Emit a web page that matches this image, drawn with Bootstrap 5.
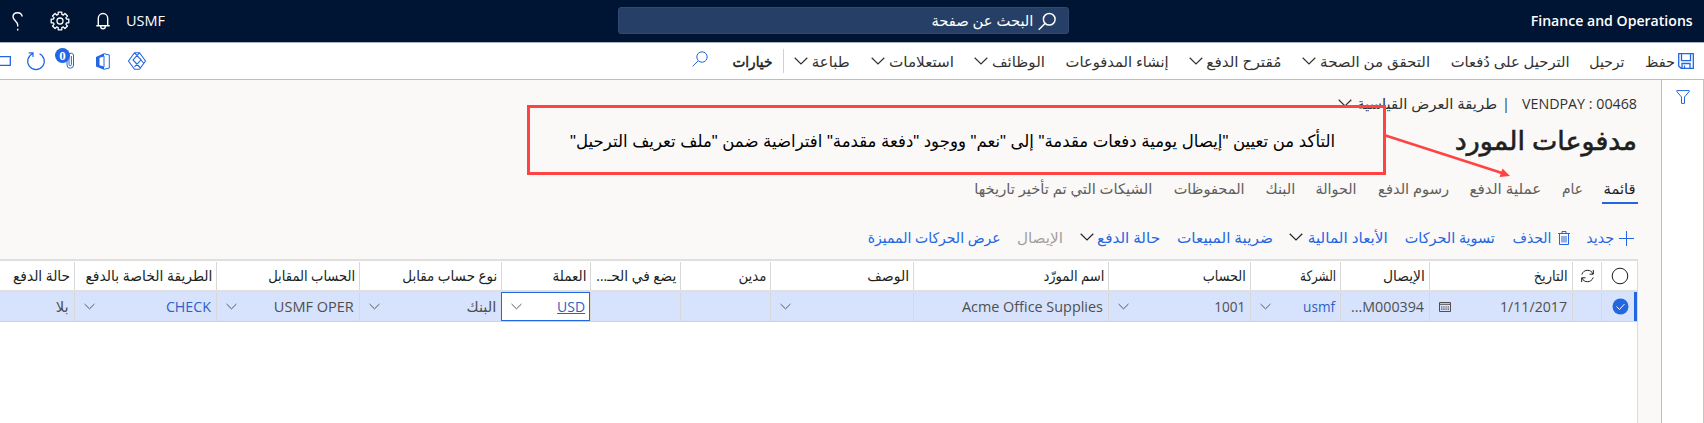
<!DOCTYPE html>
<html lang="ar" dir="rtl">
<head>
<meta charset="utf-8">
<title>مدفوعات المورد</title>
<link href="https://cdn.jsdelivr.net/npm/bootstrap@5.3.0/dist/css/bootstrap.min.css" rel="stylesheet">
<style>
:root{--blue:#2266e3;--line:#d8d8d8}
html,body{height:100%;overflow:hidden}
body{font-family:"Open Sans","DejaVu Sans",sans-serif;font-size:14.5px;line-height:20px;color:#323130;background:#faf9f8}
svg{display:block;flex:none;fill:none;stroke:currentColor;overflow:visible}
.lbl{display:block;flex:none;white-space:nowrap;overflow:visible}
.lbl>span{display:inline-block;transform-origin:100% 50%}
.topbar{height:43px;background:#001433;border-bottom:1px solid #a9b0bd;padding:0 11px 0 12px;color:#fff}
.finder{width:451px;height:27px;background:#263f66;border:1px solid #324a6f;border-radius:3px;margin-right:462px;margin-top:-2px;padding:2px 12px 0 0;gap:5px}
.endgroup{margin-right:auto}
.toolbar{height:37px;border-bottom:1px solid #bdbdbd;padding:0 10px 0 0;gap:20.35px}
.toolbar .lbl{padding-top:1px}
.withicon{gap:4px}
.stroked{-webkit-text-stroke:.5px #201f1e;color:#201f1e}
.vline{width:1px;height:24px;background:#d2d0ce;margin:0 -10px}
.shell{height:343px}
.rail{width:43px;border-right:1px solid #c8c6c4;border-left:1px solid #bdbdbd;padding-top:10px}
.main-pane{padding-top:14px}
.crumb{height:20px;padding-right:24px;gap:12px}
.heading{font-size:26px;line-height:36px;font-weight:400;-webkit-text-stroke:.6px #201f1e;color:#201f1e;padding-right:24px;height:46px;margin-top:8px}
.viewtabs{height:38px;padding-right:25px;gap:20.8px;color:#605e5c;padding-top:4px}
.viewtabs .active{color:#201f1e;position:relative}
.viewtabs .active::after{content:"";position:absolute;left:-2px;right:-2px;bottom:-5px;height:2px;background:var(--blue)}
.actions{height:40px;padding-right:27px;gap:16.3px;color:var(--blue);margin-top:12px;margin-bottom:1px}
.actions .off{color:#a19f9d}
.gridbox{height:164px;background:#fff;border-top:2px solid #e1dfdd;border-right:1px solid #dcdcdc;margin-right:23px}
.hrow{height:31px;border-bottom:2px solid #dfdfdf;padding-top:1px}
.drow{height:30px;background:#d7e3fc;border-bottom:1px solid #cfd2d8;color:#504f4e}
.cellx{flex:none;border-left:1px solid var(--line);padding:0 4px;display:flex;align-items:center}
.hrow .cellx{color:#201f1e}
.drow .cellx{justify-content:space-between;padding:0 5px 0 9px}
.w36{width:36px}.w29{width:29px}.w89{width:89px}.w90{width:90px}.w142{width:142px}.w143{width:143px}.w195{width:195px}.w74{width:74px;border:0}
.link{color:#2f5fc4}
.drow .editing{background:#fff;border:1px solid var(--blue);padding-right:4px}
.editing .link span{text-decoration:underline}
.picked{border-right:3px solid var(--blue)}
.note{position:absolute;left:527px;top:105px;width:859px;height:70px;border:3px solid #ff4343;color:#000;font-family:"Liberation Sans","DejaVu Sans",sans-serif;font-size:17px;padding:4px 48px 0 0}
.arrow{position:absolute;left:1384px;top:134px;stroke:#ff4343}
.clipbox{position:relative;width:20px;height:20px}
.count{position:absolute;left:0;top:-3px;width:15px;height:15px;border-radius:50%;background:var(--blue);color:#fff;font:bold 13px/15px "Liberation Serif",serif;text-align:center}
</style>
</head>
<body>
<svg width="0" height="0" class="position-absolute">
  <symbol id="chev" viewBox="0 0 14 8"><path d="M.7.8 7 7 13.3.8" fill="none" stroke-width="1.2"/></symbol>
  <symbol id="lens" viewBox="0 0 16 16"><path d="M.6 15.4 6 10M15.2 6a5.2 5.2 0 1 1-10.400 0 5.200 5.200 0 0 1 10.400 0z" fill="none"/></symbol>
</svg>

<header class="topbar d-flex align-items-center">
  <div class="lbl fw-semibold" data-w="162">Finance and Operations</div>
  <div class="finder d-flex align-items-center">
    <svg width="18" height="19" stroke-width="1.3"><use href="#lens"/></svg>
    <div class="lbl" data-w="102">البحث عن صفحة</div>
  </div>
  <div class="endgroup d-flex align-items-center">
    <div class="lbl" data-w="39">USMF</div>
    <svg width="14" height="18" viewBox="0 0 14 18" stroke-width="1.4" style="margin-right:16px"><path d="M2.300 13.500V6.200a4.700 4.700 0 0 1 9.400 0v7.300M.3 13.700h13.400M4.700 14.500a2.300 2.300 0 0 0 4.600 0"/></svg>
    <svg id="gear" width="20" height="20" viewBox="-10 -10 20 20" stroke-width="1.3" style="margin-right:26px"><circle r="3"/><path id="cog" stroke-linejoin="round"/></svg>
    <svg width="11" height="19" viewBox="0 0 11 19" stroke-width="1.4" style="margin-right:27px"><path d="M10.300 4.500C9.600 2 7.900.7 5.700.7 3 .7 1 2.300 1 4.800c0 3.600 4.700 4.200 4.700 8.200v1.500M5.700 16.700v1.800"/></svg>
  </div>
</header>

<nav class="toolbar bg-white d-flex align-items-center">
  <div class="d-flex align-items-center" style="gap:3px">
    <svg width="16" height="16" viewBox="0 0 16 16" style="color:#2266e3"><path d="M1 .7h14.300v14.600H3L.7 13V.7zM3.500.7v7h9v-7M4 15v-4.500h8V15M6.500 15v-2.500" stroke-width="1.300"/></svg>
    <div class="lbl" data-w="30">حفظ</div>
  </div>
  <div class="lbl" data-w="35">ترحيل</div>
  <div class="lbl" data-w="119">الترحيل على دُفعات</div>
  <div class="d-flex align-items-center withicon"><div class="lbl" data-w="110">التحقق من الصحة</div><svg width="14" height="8"><use href="#chev"/></svg></div>
  <div class="d-flex align-items-center withicon"><div class="lbl" data-w="75">مُقترح الدفع</div><svg width="14" height="8"><use href="#chev"/></svg></div>
  <div class="lbl" data-w="103">إنشاء المدفوعات</div>
  <div class="d-flex align-items-center withicon"><div class="lbl" data-w="53">الوظائف</div><svg width="14" height="8"><use href="#chev"/></svg></div>
  <div class="d-flex align-items-center withicon"><div class="lbl" data-w="65">استعلامات</div><svg width="14" height="8"><use href="#chev"/></svg></div>
  <div class="d-flex align-items-center withicon"><div class="lbl" data-w="38">طباعة</div><svg width="14" height="8"><use href="#chev"/></svg></div>
  <div class="vline"></div>
  <div class="lbl stroked" data-w="40" style="margin-left:2px">خيارات</div>
  <svg width="16" height="16" style="color:#2266e3;margin:0 2px 4px 0"><use href="#lens"/></svg>
  <div class="endgroup d-flex align-items-center" style="color:#2266e3">
    <svg width="18" height="18" viewBox="0 0 18 18" stroke-width="1.100"><path d="M6.500.8h5L17.500 9l-6 8.200h-5L.5 9zM6.500.8l6.500 7-6.500 7M11.500.8 5 8l7.500 8M13 8l2.500 3"/></svg>
    <svg width="14" height="17" viewBox="0 0 14 17" style="margin-right:18px"><path d="M0 4 8 .2v3.300L3.500 4.800v7.400L8 13.500v3.300L0 13.500z" fill="currentColor" stroke="none"/><path d="M8 .7 13.300 2v13L8 16.300M8 3v11"/></svg>
    <div class="clipbox" style="margin-right:21px">
      <svg width="20" height="19" viewBox="0 0 20 19"><path d="M12 5v9a3 3 0 0 0 6.500 0V4a2.300 2.300 0 0 0-4.500 0v9.500a1.200 1.200 0 0 0 2.400 0V5" /></svg>
      <span class="count">0</span>
    </div>
    <svg width="18" height="19" viewBox="0 0 18 19" stroke-width="1.200" style="margin-right:10px"><path d="M12.500 1.800A8.300 8.300 0 1 1 5.500 1.800M1.800.8h4.200v4.200"/></svg>
    <svg width="11" height="10" viewBox="0 0 11 10" stroke-width="1.300" style="margin-right:16px"><path d="M0 .7h10.300v8.600H0"/></svg>
  </div>
</nav>

<div class="shell d-flex">
  <aside class="rail bg-white d-flex justify-content-center align-items-start flex-shrink-0">
    <svg width="14" height="14" viewBox="0 0 14 14" style="color:#2266e3"><path d="M.8.6h12.400v1L8.500 7v6.400h-3V7L.8 1.600z"/></svg>
  </aside>
  <main class="main-pane flex-grow-1">
    <div class="crumb d-flex align-items-center">
      <div class="lbl" data-w="115" dir="ltr">VENDPAY : 00468</div>
      <span style="width:3px">|</span>
      <div class="d-flex align-items-center" style="gap:5px;margin-right:-2px"><div class="lbl" data-w="140">طريقة العرض القياسية</div><svg width="14" height="8" style="margin-bottom:3px"><use href="#chev"/></svg></div>
    </div>
    <h1 class="heading mb-0"><div class="lbl" data-w="182">مدفوعات المورد</div></h1>
    <div class="viewtabs d-flex align-items-center">
      <div class="lbl active" data-w="32">قائمة</div>
      <div class="lbl" data-w="21">عام</div>
      <div class="lbl" data-w="72">عملية الدفع</div>
      <div class="lbl" data-w="71">رسوم الدفع</div>
      <div class="lbl" data-w="41">الحوالة</div>
      <div class="lbl" data-w="30">البنك</div>
      <div class="lbl" data-w="71">المحفوظات</div>
      <div class="lbl" data-w="178">الشيكات التي تم تأخير تاريخها</div>
    </div>
    <div class="actions d-flex align-items-center">
      <div class="d-flex align-items-center" style="gap:5px"><svg width="15" height="15" viewBox="0 0 15 15"><path d="M7.500 0v15M0 7.500h15"/></svg><div class="lbl" data-w="28">جديد</div></div>
      <div class="d-flex align-items-center" style="gap:6px"><svg width="12" height="14" viewBox="0 0 12 14"><path d="M0 2.500h12M4 2.500v-2h4v2M1.500 2.500v11h9v-11M4 5v6.500M6 5v6.500M8 5v6.500"/></svg><div class="lbl" data-w="39">الحذف</div></div>
      <div class="lbl" data-w="90" style="margin-right:2px">تسوية الحركات</div>
      <div class="d-flex align-items-center" style="gap:5px"><div class="lbl" data-w="80">الأبعاد المالية</div><svg width="14" height="8" class="text-dark" style="margin-bottom:3px"><use href="#chev"/></svg></div>
      <div class="lbl" data-w="96">ضريبة المبيعات</div>
      <div class="d-flex align-items-center withicon"><div class="lbl" data-w="63">حالة الدفع</div><svg width="14" height="8" class="text-dark" style="margin-bottom:3px"><use href="#chev"/></svg></div>
      <div class="lbl off" data-w="46">الإيصال</div>
      <div class="lbl" data-w="133">عرض الحركات المميزة</div>
    </div>
    <div class="gridbox">
      <div class="hrow d-flex">
        <div class="cellx w36 justify-content-center"><svg width="18" height="18" viewBox="0 0 18 18" stroke="#605e5c"><circle cx="9" cy="9" r="7.800"/></svg></div>
        <div class="cellx w29 justify-content-center"><svg width="13" height="14" viewBox="0 0 13 14" stroke="#605e5c"><path d="M.8 5.500C2 2.500 4 1.300 6.500 1.300S11 2.500 12 5M12.300 1v4.200H8.500M12.200 8.500c-1.200 3-3.200 4.200-5.700 4.200S2 11.500 1 9M.7 13V8.800h3.800"/></svg></div>
        <div class="cellx w143"><div class="lbl" data-w="34">التاريخ</div></div>
        <div class="cellx w89"><div class="lbl" data-w="42">الإيصال</div></div>
        <div class="cellx w90"><div class="lbl" data-w="36">الشركة</div></div>
        <div class="cellx w142"><div class="lbl" data-w="43">الحساب</div></div>
        <div class="cellx w195"><div class="lbl" data-w="61">اسم المورّد</div></div>
        <div class="cellx w143"><div class="lbl" data-w="42">الوصف</div></div>
        <div class="cellx w90"><div class="lbl" data-w="28">مدين</div></div>
        <div class="cellx w90"><div class="lbl" data-w="80">يضع في الحـ...</div></div>
        <div class="cellx w89"><div class="lbl" data-w="34">العملة</div></div>
        <div class="cellx w142"><div class="lbl" data-w="95">نوع حساب مقابل</div></div>
        <div class="cellx w143"><div class="lbl" data-w="87">الحساب المقابل</div></div>
        <div class="cellx w142"><div class="lbl" data-w="127">الطريقة الخاصة بالدفع</div></div>
        <div class="cellx w74"><div class="lbl" data-w="57">حالة الدفع</div></div>
      </div>
      <div class="drow d-flex">
        <div class="cellx w36 picked"><svg width="17" height="17" viewBox="0 0 17 17"><circle cx="8.500" cy="8.500" r="8" fill="#2266e3" stroke="none"/><path d="m4.500 8.500 3 3 5-5.500" stroke="#fff"/></svg></div>
        <div class="cellx w29"></div>
        <div class="cellx w143"><div class="lbl" data-w="67" dir="ltr">1/11/2017</div><svg width="12" height="10" viewBox="0 0 12 10"><path d="M.5.5h11v9H.5zM.5 2.300h11"/><path d="M2 5h8M2 7.200h8" stroke-width="1.200" stroke-dasharray="1.400 .8"/></svg></div>
        <div class="cellx w89"><div class="lbl" data-w="73" dir="ltr">...M000394</div></div>
        <div class="cellx w90"><div class="lbl link" data-w="32">usmf</div><svg width="11" height="7"><use href="#chev"/></svg></div>
        <div class="cellx w142"><div class="lbl" data-w="31">1001</div><svg width="11" height="7"><use href="#chev"/></svg></div>
        <div class="cellx w195"><div class="lbl" data-w="141">Acme Office Supplies</div></div>
        <div class="cellx w143"><span></span><svg width="11" height="7"><use href="#chev"/></svg></div>
        <div class="cellx w90"></div>
        <div class="cellx w90"></div>
        <div class="cellx w89 editing"><div class="lbl link" data-w="28">USD</div><svg width="11" height="7"><use href="#chev"/></svg></div>
        <div class="cellx w142"><div class="lbl" data-w="30">البنك</div><svg width="11" height="7"><use href="#chev"/></svg></div>
        <div class="cellx w143"><div class="lbl" data-w="80">USMF OPER</div><svg width="11" height="7"><use href="#chev"/></svg></div>
        <div class="cellx w142"><div class="lbl link" data-w="45">CHECK</div><svg width="11" height="7"><use href="#chev"/></svg></div>
        <div class="cellx w74"><div class="lbl" data-w="13">بلا</div></div>
      </div>
    </div>
  </main>
</div>

<div class="note d-flex align-items-center"><div class="lbl" data-w="765">التأكد من تعيين "إيصال يومية دفعات مقدمة" إلى "نعم" ووجود "دفعة مقدمة" افتراضية ضمن "ملف تعريف الترحيل"</div></div>
<svg class="arrow" width="128" height="44" viewBox="0 0 128 44"><path d="M0 1 118 39" stroke-width="2.500"/><path d="m126 42-10.500 1 3-8.500z" fill="#ff4343" stroke="none"/></svg>

<script src="https://cdn.jsdelivr.net/npm/bootstrap@5.3.0/dist/js/bootstrap.bundle.min.js"></script>
<script>
document.querySelectorAll('.lbl').forEach(function (el) {
  var s = document.createElement('span');
  while (el.firstChild) s.appendChild(el.firstChild);
  el.appendChild(s);
  var w = +el.dataset.w, n = s.getBoundingClientRect().width;
  el.style.width = w + 'px';
  s.style.transformOrigin = el.dir === 'ltr' ? '0 50%' : '100% 50%';
  s.style.transform = 'scaleX(' + (w / n) + ')';
});
// Eight-toothed gear outline
var d = '';
for (var i = 0; i < 8; i++) [[-.27, 6.8], [-.2, 9], [.2, 9], [.27, 6.8]].forEach(function (p) {
  var a = i * Math.PI / 4 + p[0];
  d += (d ? 'L' : 'M') + (p[1] * Math.cos(a)).toFixed(2) + ' ' + (p[1] * Math.sin(a)).toFixed(2);
});
document.getElementById('cog').setAttribute('d', d + 'z');
</script>
</body>
</html>
